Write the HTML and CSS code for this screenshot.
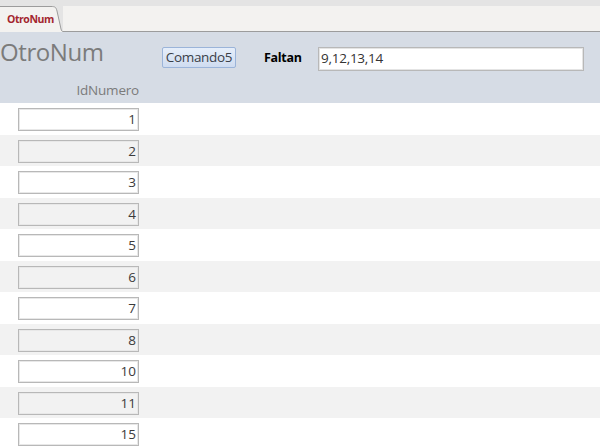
FILE: index.html
```html
<!DOCTYPE html>
<html>
<head>
<meta charset="utf-8">
<link rel="stylesheet" href="styles.css">
</head>
<body>
<div class="topstrip"></div>
<div class="tabbar">
  <div class="tab">OtroNum</div>
  <svg class="tab-edge" width="12" height="26" viewBox="0 0 12 26">
    <path d="M0 0 L0 0.5 C4 0.5 5 1 6 5 L10 23 C10.6 25 11 25.5 12 25.5 L12 0 Z" fill="#e4e4e4"/>
    <path d="M0 0.5 C4 0.5 5 1 6 5 L10 23 C10.6 25 11 25.5 12 25.5" fill="none" stroke="#9c9c9c" stroke-width="1"/>
  </svg>
  <div class="tab-rest"></div>
</div>
<div class="header">
  <div class="header-top">
    <div class="title">OtroNum</div>
    <div class="btn">Comando5</div>
    <div class="faltan">Faltan</div>
    <div class="field">9,12,13,14</div>
  </div>
  <div class="colhead">IdNumero</div>
</div>
<div class="rows">
  <div class="row"><div class="cell">1</div></div>
  <div class="row alt"><div class="cell">2</div></div>
  <div class="row"><div class="cell">3</div></div>
  <div class="row alt"><div class="cell">4</div></div>
  <div class="row"><div class="cell">5</div></div>
  <div class="row alt"><div class="cell">6</div></div>
  <div class="row"><div class="cell">7</div></div>
  <div class="row alt"><div class="cell">8</div></div>
  <div class="row"><div class="cell">10</div></div>
  <div class="row alt"><div class="cell">11</div></div>
  <div class="row"><div class="cell">15</div></div>
</div>
</body>
</html>
```
FILE: styles.css
```css
html, body {
  margin: 0;
  padding: 0;
  background: #ffffff;
  width: 600px;
  height: 446px;
  overflow: hidden;
  font-family: "Open Sans", "Noto Sans", sans-serif;
}
.topstrip {
  height: 6px;
  background: #e4e4e4;
}
.tabbar {
  display: flex;
  height: 26px;
  background: #f3f2f0;
}
.tab {
  width: 51px;
  height: 25px;
  border-top: 1px solid #9c9c9c;
  box-sizing: border-box;
  padding: 6px 0 0 7px;
  font-size: 10.5px;
  font-weight: bold;
  color: #a3262f;
  letter-spacing: -0.45px;
  line-height: 13px;
  background: #f3f2f0;
  white-space: nowrap;
}
.tab-edge {
  display: block;
  flex: none;
}
.tab-rest {
  flex: 1;
  border-bottom: 1px solid #9c9c9c;
}
.header {
  background: #d6dce5;
  height: 71px;
}
.header-top {
  display: flex;
  align-items: flex-start;
  height: 47px;
}
.title {
  font-size: 24px;
  color: #7b7b7b;
  line-height: 28px;
  margin-top: 6px;
  margin-left: 0;
  width: 162px;
  letter-spacing: -0.4px;
}
.btn {
  margin-top: 15px;
  width: 74px;
  height: 21px;
  box-sizing: border-box;
  border: 1px solid #9bb4d9;
  border-radius: 2px;
  background: linear-gradient(#e6eefa, #cfdcf0);
  font-size: 13.5px;
  line-height: 18px;
  color: #3a3f48;
  text-align: center;
  letter-spacing: -0.3px;
}
.faltan {
  margin-top: 17px;
  margin-left: 28px;
  width: 54px;
  font-size: 12.5px;
  font-weight: bold;
  color: #000;
  line-height: 17px;
  letter-spacing: -0.3px;
}
.field {
  margin-top: 15px;
  width: 266px;
  height: 24px;
  box-sizing: border-box;
  border: 1px solid #b8b8b8;
  box-shadow: inset 0 0 0 1px #e4e4e4;
  background: #fff;
  font-size: 13.5px;
  line-height: 21px;
  padding-left: 2px;
  color: #333;
  letter-spacing: -0.25px;
}
.colhead {
  width: 139px;
  text-align: right;
  font-size: 13.5px;
  color: #7b7b7b;
  line-height: 16px;
  margin-top: 3px;
  letter-spacing: -0.2px;
}
.rows {
  display: flex;
  flex-direction: column;
}
.row {
  height: 31.5px;
  flex: none;
  background: #ffffff;
  padding-top: 5px;
  box-sizing: border-box;
}
.row.alt {
  background: #f2f2f2;
}
.cell {
  margin-left: 18px;
  width: 121px;
  height: 23px;
  box-sizing: border-box;
  border: 1px solid #b8b8b8;
  box-shadow: inset 0 0 0 1px #e8e8e8;
  text-align: right;
  font-size: 13.5px;
  line-height: 20px;
  padding-right: 2px;
  color: #3b3b3b;
}
.row .cell { background: #ffffff; }
.row.alt .cell { background: #f2f2f2; }
```
